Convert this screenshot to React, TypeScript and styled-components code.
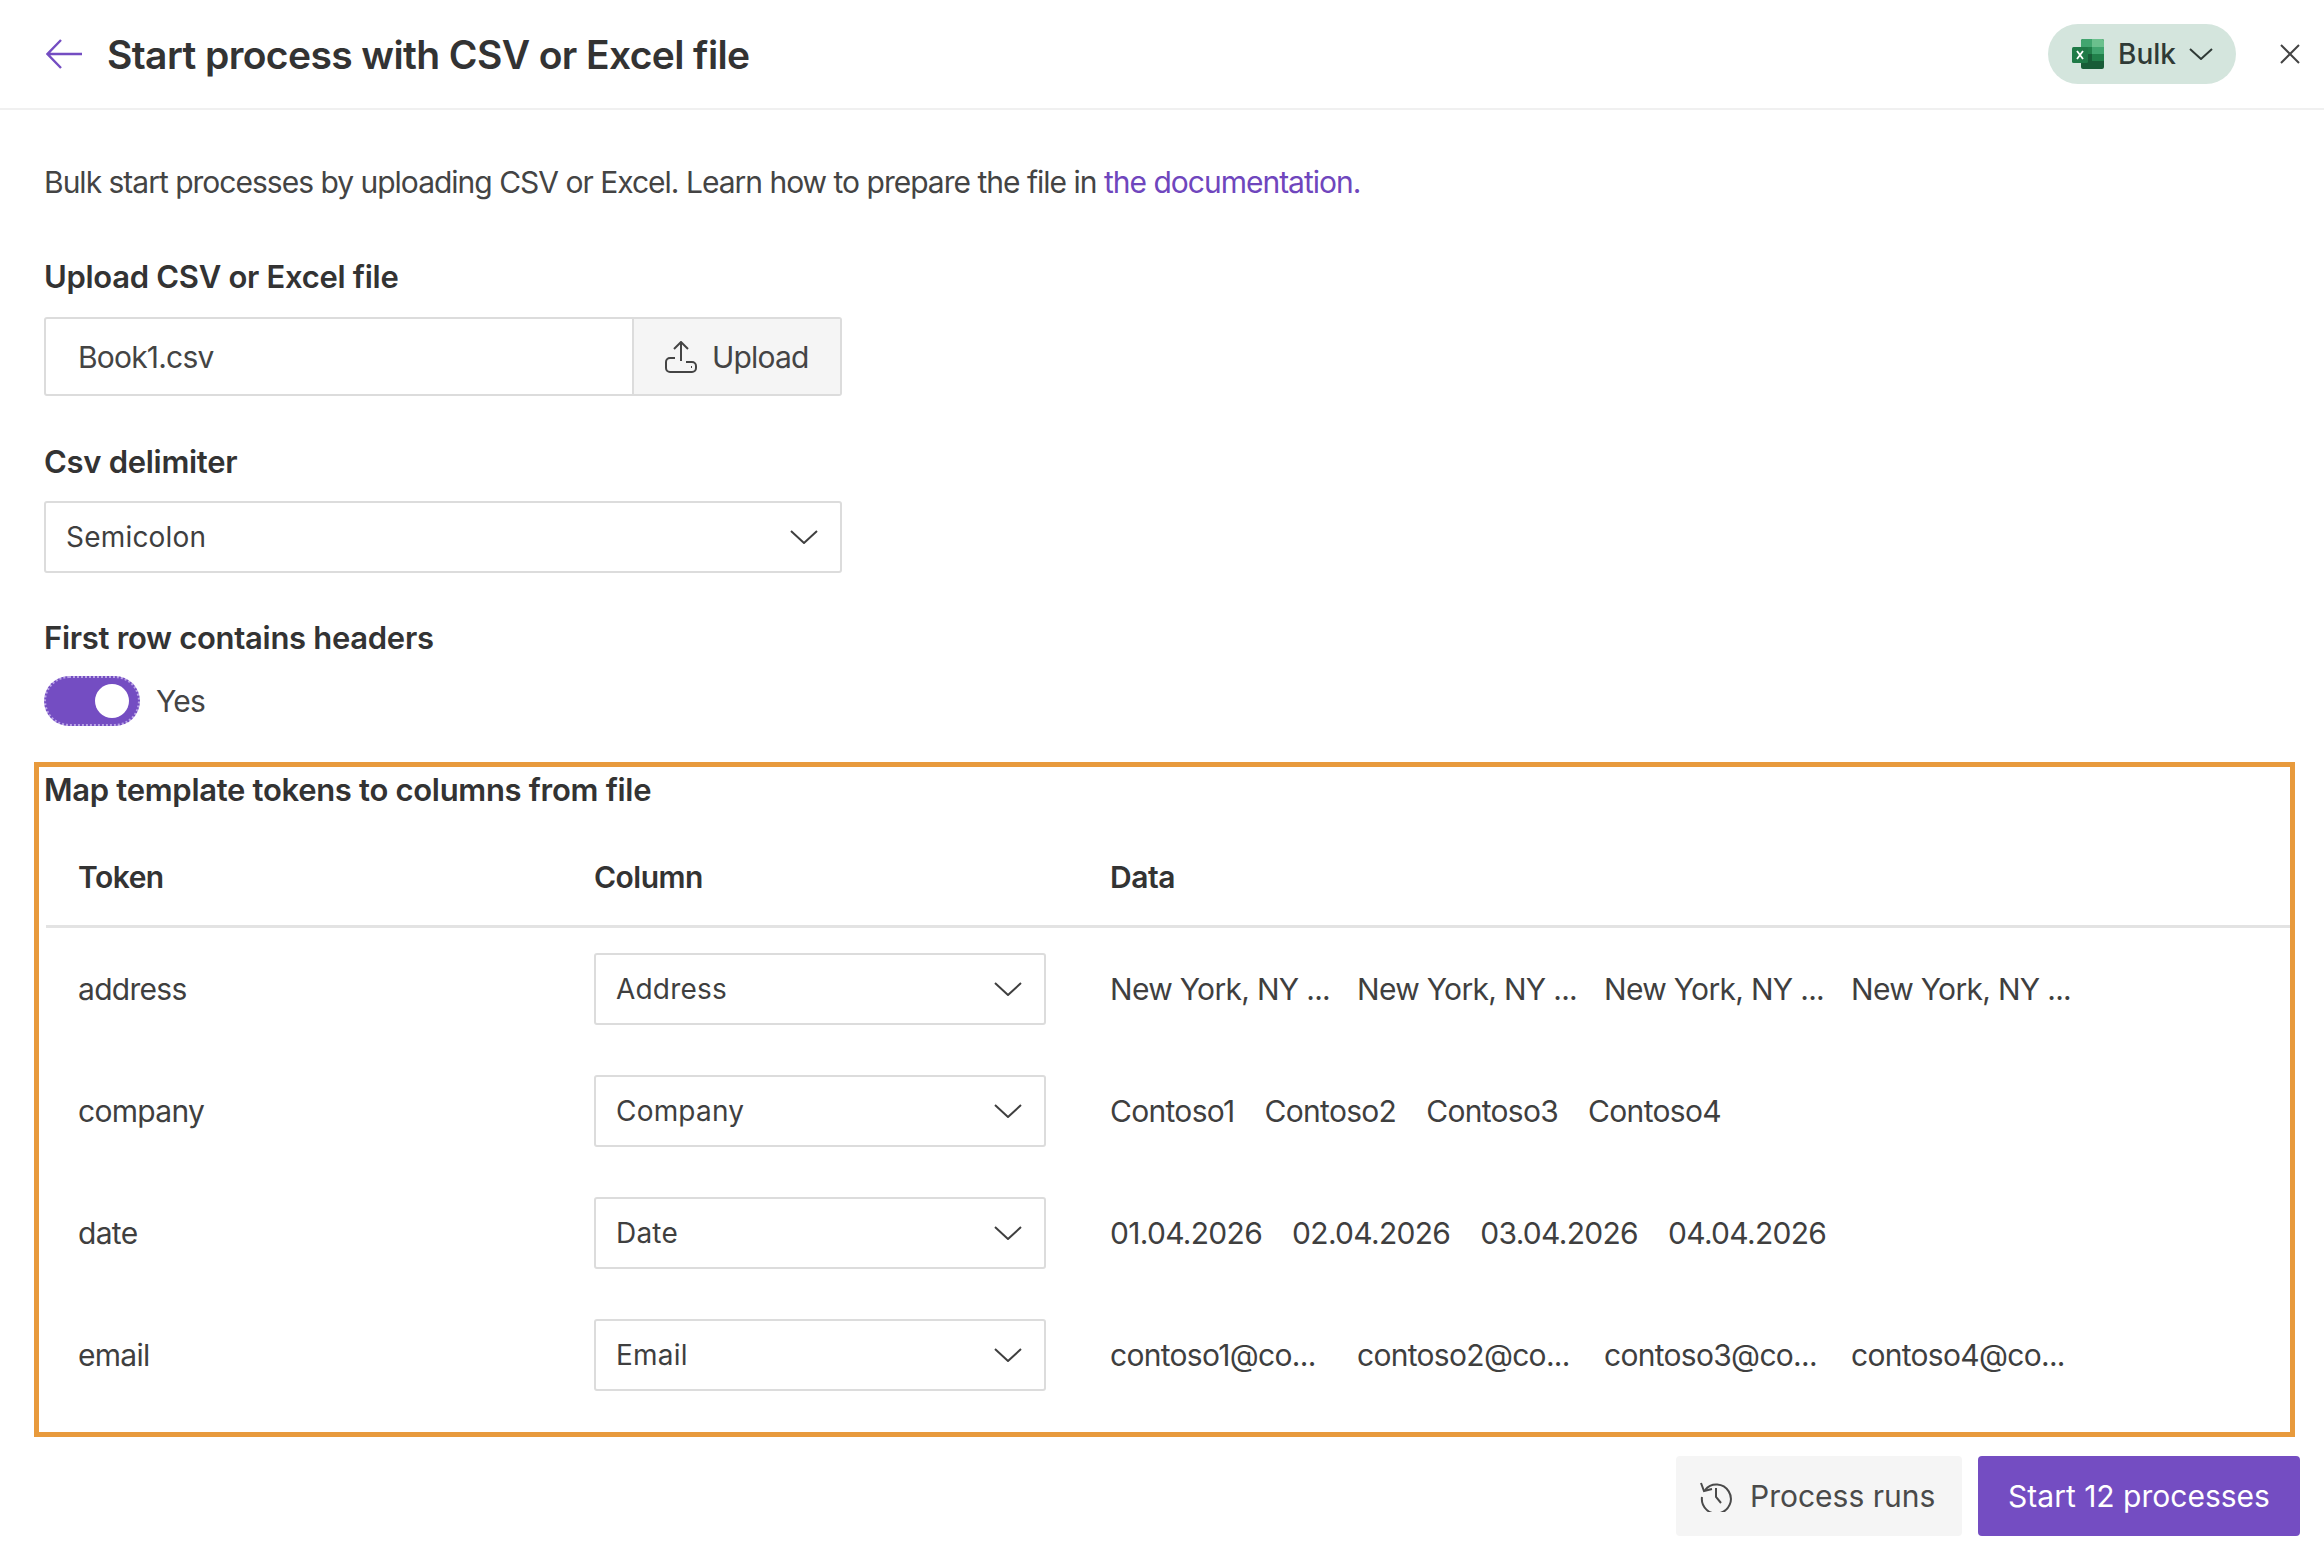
import * as React from "react";
import styled, { createGlobalStyle } from "styled-components";

const GlobalStyle = createGlobalStyle`
  html, body {
    margin: 0;
    padding: 0;
    background: #fff;
  }
  body {
    font-family: Inter, "Noto Sans", sans-serif;
    color: #3b3b3b;
  }
`;

const Page = styled.div`
  width: 2324px;
  height: 1548px;
  display: flex;
  flex-direction: column;
  overflow: hidden;
  background: #fff;
`;

const Header = styled.header`
  height: 108px;
  flex: none;
  display: flex;
  align-items: center;
  padding: 0 24px 0 46px;
  border-bottom: 2px solid #f0f0f0;
`;

const BackButton = styled.div`
  width: 36px;
  height: 30px;
  margin-right: 25px;
  display: flex;
  color: #744dc2;
`;

const Title = styled.h1`
  margin: 0;
  flex: 1;
  font-size: 39px;
  font-weight: 600;
  letter-spacing: -0.6px;
  color: #333;
`;

const KindPill = styled.div`
  width: 188px;
  height: 60px;
  box-sizing: border-box;
  padding-left: 24px;
  border-radius: 30px;
  background: #d4e5dd;
  display: flex;
  align-items: center;
  color: #2f3a36;
  font-size: 28px;
  font-weight: 500;
`;

const PillLabel = styled.span`
  margin: 0 13px 0 14px;
`;

const CloseButton = styled.div`
  width: 20px;
  height: 20px;
  margin-left: 44px;
  display: flex;
  color: #444;
`;

const Main = styled.main`
  flex: 1;
  min-height: 0;
  padding: 52px 29px 0 44px;
`;

const Intro = styled.p`
  margin: 0;
  font-size: 30px;
  line-height: 40px;
  letter-spacing: -1px;
  color: #444;
`;

const DocLink = styled.a`
  color: #6f46bd;
`;

const FieldLabel = styled.div<{ $top: number }>`
  margin-top: ${(props) => props.$top}px;
  font-size: 31px;
  line-height: 40px;
  font-weight: 600;
  letter-spacing: -0.3px;
  color: #333;
`;

const UploadBox = styled.div`
  width: 798px;
  height: 79px;
  margin-top: 20px;
  box-sizing: border-box;
  display: flex;
  border: 2px solid #dcdcdc;
  border-radius: 3px;
  font-size: 30px;
  letter-spacing: -0.8px;
  color: #444;
`;

const FileName = styled.div`
  flex: 1;
  display: flex;
  align-items: center;
  padding-left: 32px;
`;

const UploadButton = styled.div`
  width: 208px;
  flex: none;
  box-sizing: border-box;
  display: flex;
  align-items: center;
  gap: 15px;
  padding-left: 31px;
  background: #f5f5f5;
  border-left: 2px solid #dcdcdc;
`;

const SelectBox = styled.div<{ $width: number; $top?: number }>`
  width: ${(props) => props.$width}px;
  height: 72px;
  margin-top: ${(props) => props.$top ?? 0}px;
  box-sizing: border-box;
  display: flex;
  align-items: center;
  justify-content: space-between;
  padding: 0 22px 0 20px;
  background: #fff;
  border: 2px solid #dcdcdc;
  border-radius: 3px;
  font-size: 28px;
  letter-spacing: 0.2px;
  color: #3f3f3f;
`;

const ToggleRow = styled.div`
  margin-top: 18px;
  display: flex;
  align-items: center;
  gap: 16px;
  font-size: 30px;
  letter-spacing: -0.8px;
  color: #444;
`;

const ToggleTrack = styled.div`
  width: 96px;
  height: 50px;
  box-sizing: border-box;
  padding-right: 9px;
  display: flex;
  align-items: center;
  justify-content: flex-end;
  background: #744dc2;
  border: 2px dotted #b9a3e6;
  border-radius: 25px;
`;

const ToggleKnob = styled.div`
  width: 34px;
  height: 34px;
  border-radius: 50%;
  background: #fff;
`;

const MappingSection = styled.section`
  height: 675px;
  margin: 36px 0 0 -10px;
  box-sizing: border-box;
  padding: 3px 0 16px 5px;
  border: 5px solid #e89a3c;
`;

const SectionTitle = styled.div`
  font-size: 31px;
  line-height: 40px;
  font-weight: 600;
  letter-spacing: -0.3px;
  color: #333;
`;

const Table = styled.div`
  margin: 18px 0 0 2px;
`;

const HeaderRow = styled.div`
  height: 97px;
  display: grid;
  grid-template-columns: 516px 516px 1fr;
  align-items: center;
  padding-left: 32px;
  border-bottom: 3px solid #e3e3e3;
  font-size: 30px;
  font-weight: 600;
  letter-spacing: -0.5px;
  color: #333;
`;

const Row = styled.div`
  height: 122px;
  display: grid;
  grid-template-columns: 516px 516px 1fr;
  align-items: center;
  padding-left: 32px;
  font-size: 30px;
  letter-spacing: -0.7px;
  color: #3f3f3f;
`;

const DataCell = styled.div`
  display: flex;
  gap: 30px;
`;

const DataItem = styled.span<{ $fixed: boolean }>`
  width: ${(props) => (props.$fixed ? "217px" : "auto")};
  white-space: nowrap;
`;

const Footer = styled.footer`
  height: 112px;
  flex: none;
  box-sizing: border-box;
  display: flex;
  justify-content: flex-end;
  gap: 16px;
  padding: 20px 24px 0 0;
`;

const SecondaryButton = styled.div`
  width: 286px;
  height: 80px;
  box-sizing: border-box;
  padding-left: 24px;
  display: flex;
  align-items: center;
  gap: 18px;
  background: #f5f5f5;
  border-radius: 4px;
  font-size: 30px;
  color: #4a4a4a;
`;

const PrimaryButton = styled.div`
  width: 322px;
  height: 80px;
  display: flex;
  align-items: center;
  justify-content: center;
  background: #744dc2;
  border-radius: 4px;
  font-size: 30px;
  color: #fff;
`;

const Chevron = () => (
  <svg width="28" height="14" viewBox="0 0 28 14" fill="none" stroke="currentColor" strokeWidth="2">
    <path d="M1 1l13 12L27 1" />
  </svg>
);

const ExcelIcon = () => (
  <svg width="32" height="30" viewBox="0 0 32 30">
    <rect x="9" width="23" height="30" rx="2" fill="#185c37" />
    <path d="M11 0h9v8H9V2a2 2 0 0 1 2-2z" fill="#41a56f" />
    <path d="M20 0h10a2 2 0 0 1 2 2v6H20z" fill="#6bc08d" />
    <rect x="9" y="8" width="11" height="7" fill="#21804a" />
    <rect x="20" y="8" width="12" height="7" fill="#41a56f" />
    <rect x="9" y="15" width="11" height="7" fill="#185c37" />
    <rect x="20" y="15" width="12" height="7" fill="#21804a" />
    <rect y="8" width="16" height="16" rx="1.5" fill="#1f7a47" />
    <path d="M5 12l6 8M11 12l-6 8" stroke="#fff" strokeWidth="1.8" />
  </svg>
);

const UploadIcon = () => (
  <svg width="32" height="32" viewBox="0 0 32 32" fill="none" stroke="currentColor" strokeWidth="2">
    <path d="M16 20V2M9 8l7-7 7 7" />
    <path d="M10 17H5a4 4 0 0 0-4 4v6a4 4 0 0 0 4 4h22a4 4 0 0 0 4-4v-2a4 4 0 0 0-4-4h-6" />
    <path d="M26 26h1" />
  </svg>
);

const HistoryIcon = () => (
  <svg width="32" height="32" viewBox="0 0 32 32" fill="none" stroke="#4a4a4a" strokeWidth="2">
    <path d="M5 10A14.5 14.5 0 1 1 2 17" />
    <path d="M1 3l3 8 8-2" />
    <path d="M16 8v9l5 6" />
  </svg>
);

const rows = [
  { token: "address", column: "Address", fixed: true, data: ["New York, NY ...", "New York, NY ...", "New York, NY ...", "New York, NY ..."] },
  { token: "company", column: "Company", fixed: false, data: ["Contoso1", "Contoso2", "Contoso3", "Contoso4"] },
  { token: "date", column: "Date", fixed: false, data: ["01.04.2026", "02.04.2026", "03.04.2026", "04.04.2026"] },
  { token: "email", column: "Email", fixed: true, data: ["contoso1@co...", "contoso2@co...", "contoso3@co...", "contoso4@co..."] },
];

export default function App() {
  return (
    <Page>
      <GlobalStyle />
      <Header>
        <BackButton>
          <svg width="36" height="30" viewBox="0 0 36 30" fill="none" stroke="currentColor" strokeWidth="2.4">
            <path d="M36 15H2M15 1L1.5 15 15 29" />
          </svg>
        </BackButton>
        <Title>Start process with CSV or Excel file</Title>
        <KindPill>
          <ExcelIcon />
          <PillLabel>Bulk</PillLabel>
          <svg width="24" height="12" viewBox="0 0 24 12" fill="none" stroke="currentColor" strokeWidth="2">
            <path d="M1 1l11 10L23 1" />
          </svg>
        </KindPill>
        <CloseButton>
          <svg width="20" height="20" viewBox="0 0 20 20" fill="none" stroke="currentColor" strokeWidth="2">
            <path d="M1 1l18 18M19 1L1 19" />
          </svg>
        </CloseButton>
      </Header>
      <Main>
        <Intro>
          Bulk start processes by uploading CSV or Excel. Learn how to prepare the file in{" "}
          <DocLink>the documentation.</DocLink>
        </Intro>
        <FieldLabel $top={55}>Upload CSV or Excel file</FieldLabel>
        <UploadBox>
          <FileName>Book1.csv</FileName>
          <UploadButton>
            <UploadIcon />
            Upload
          </UploadButton>
        </UploadBox>
        <FieldLabel $top={46}>Csv delimiter</FieldLabel>
        <SelectBox $width={798} $top={19}>
          Semicolon
          <Chevron />
        </SelectBox>
        <FieldLabel $top={45}>First row contains headers</FieldLabel>
        <ToggleRow>
          <ToggleTrack>
            <ToggleKnob />
          </ToggleTrack>
          Yes
        </ToggleRow>
        <MappingSection>
          <SectionTitle>Map template tokens to columns from file</SectionTitle>
          <Table>
            <HeaderRow>
              <span>Token</span>
              <span>Column</span>
              <span>Data</span>
            </HeaderRow>
            {rows.map((row) => (
              <Row key={row.token}>
                <span>{row.token}</span>
                <SelectBox $width={452}>
                  {row.column}
                  <Chevron />
                </SelectBox>
                <DataCell>
                  {row.data.map((value) => (
                    <DataItem key={value} $fixed={row.fixed}>
                      {value}
                    </DataItem>
                  ))}
                </DataCell>
              </Row>
            ))}
          </Table>
        </MappingSection>
      </Main>
      <Footer>
        <SecondaryButton>
          <HistoryIcon />
          Process runs
        </SecondaryButton>
        <PrimaryButton>Start 12 processes</PrimaryButton>
      </Footer>
    </Page>
  );
}
